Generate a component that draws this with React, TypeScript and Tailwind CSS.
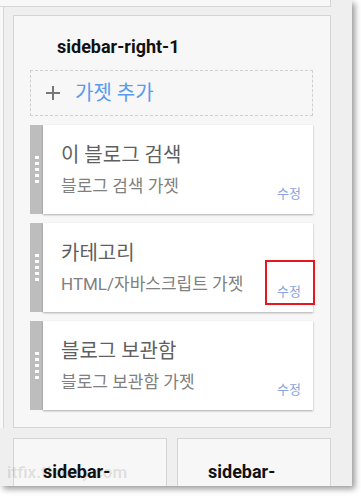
import React from 'react';

const font = { fontFamily: 'Roboto, "Noto Sans CJK KR", sans-serif' };

const widgets = [
  { title: '이 블로그 검색', sub: '블로그 검색 가젯', marked: false },
  { title: '카테고리', sub: 'HTML/자바스크립트 가젯', marked: true },
  { title: '블로그 보관함', sub: '블로그 보관함 가젯', marked: false },
];

const Handle = () => (
  <div className="w-[13px] shrink-0 bg-[#bdbdbd] flex flex-col items-center justify-center gap-[3px]">
    {[0, 1, 2, 3, 4].map(i => (
      <span key={i} className="block w-[4px] h-[3px] bg-white" />
    ))}
  </div>
);

const WidgetCard = ({ title, sub, marked }: { title: string; sub: string; marked: boolean }) => (
  <div className="flex h-[89px]">
    <Handle />
    <div className="relative flex-1 flex justify-between bg-white shadow-[0_1px_2px_rgba(0,0,0,0.3)]">
      <div className="pt-[17px] pl-[18px]">
        <div className="text-[20px] leading-[26px] text-[#5f5f5f]">{title}</div>
        <div className="mt-[7px] text-[17px] leading-[22px] text-[#808080]">{sub}</div>
      </div>
      <div className="self-end pb-[12px] pr-[12px] text-[13px] leading-[16px] text-[#8aa3e0]">수정</div>
      {marked && (
        <span className="absolute right-[-2px] top-[37px] w-[50px] h-[45px] border-2 border-[#e8171f]" />
      )}
    </div>
  </div>
);

export default function App() {
  return (
    <div className="w-[361px] h-[496px] bg-white overflow-hidden" style={font}>
      <div className="relative w-[352px] h-[486px] bg-[#efefef] overflow-hidden shadow-[3px_3px_6px_rgba(0,0,0,0.4)]">
        <div className="w-[331px] h-[7px] bg-[#f8f8f8] border-b border-r border-[#d5d5d5]" />
        <div className="flex">
          <div className="w-[4px] h-[421px] bg-[#f8f8f8] border-r border-[#d5d5d5]" />
          <div className="ml-[9px] mt-[8px] w-[318px]">
            <div className="h-[413px] bg-[#f7f7f7] border border-[#d5d5d5] pt-[20px] pl-[16px] pr-[17px]">
              <h2 className="ml-[27px] text-[18px] leading-[22px] font-bold text-[#111]">sidebar-right-1</h2>
              <div className="mt-[12px] h-[46px] border border-dashed border-[#cfcfcf] flex items-center pl-[14px] gap-[14px]">
                <svg width="16" height="16" viewBox="0 0 16 16" className="shrink-0">
                  <path d="M8 1v14M1 8h14" stroke="#777" strokeWidth="2" />
                </svg>
                <span className="text-[20px] leading-[26px] text-[#5a9bf0]">가젯 추가</span>
              </div>
              <div className="mt-[9px] flex flex-col gap-[9px]">
                {widgets.map(w => (
                  <WidgetCard key={w.title} {...w} />
                ))}
              </div>
            </div>
            <div className="mt-[10px] flex gap-[10px]">
              <div className="w-[154px] h-[60px] bg-[#f7f7f7] border border-[#d5d5d5] pl-[29px] pt-[22px]">
                <h3 className="text-[18px] leading-[22px] font-bold text-[#111]">sidebar-</h3>
              </div>
              <div className="w-[154px] h-[60px] bg-[#f7f7f7] border border-[#d5d5d5] pl-[30px] pt-[22px]">
                <h3 className="text-[18px] leading-[22px] font-bold text-[#111]">sidebar-</h3>
              </div>
            </div>
          </div>
        </div>
        <span className="absolute left-[7px] top-[461px] text-[17px] leading-[22px] font-bold text-black/10">itfix.tistory.com</span>
      </div>
    </div>
  );
}
